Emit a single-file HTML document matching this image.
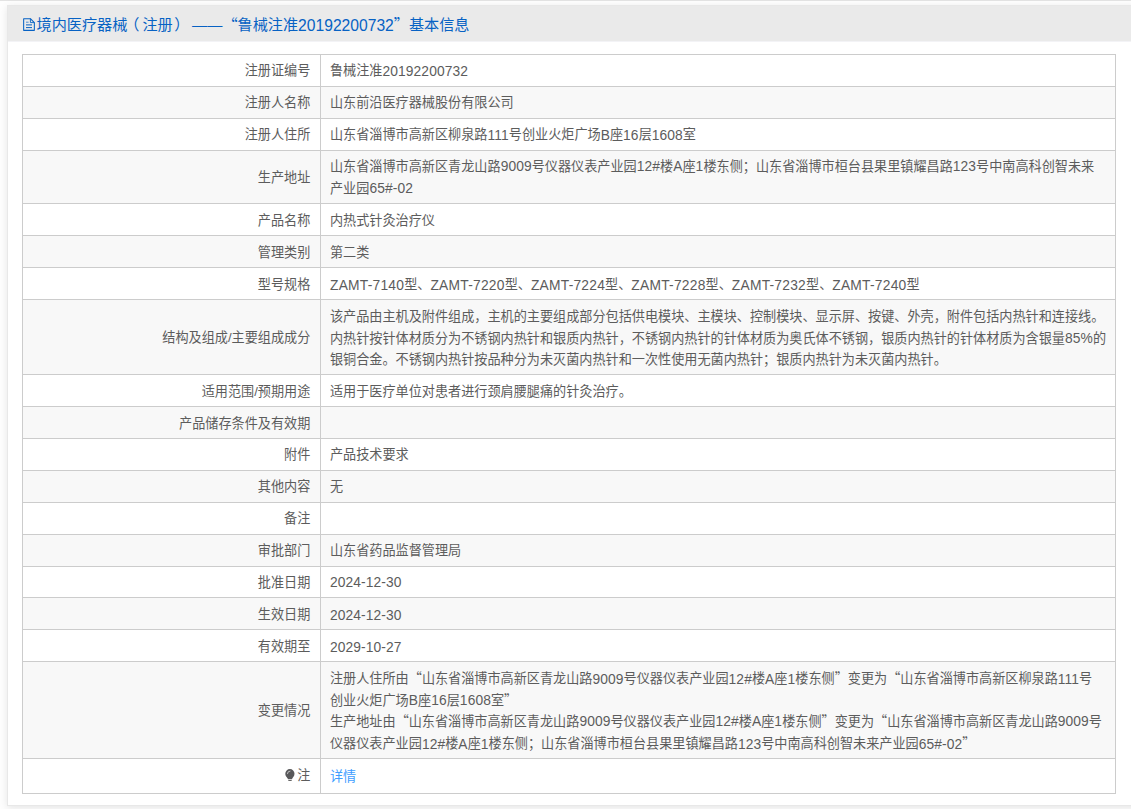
<!DOCTYPE html>
<html lang="zh-CN">
<head>
<meta charset="utf-8">
<title>境内医疗器械（注册）基本信息</title>
<style>
html,body{margin:0;padding:0;}
body{width:1131px;height:809px;overflow:hidden;background:#fefefe;position:relative;
 font-family:"Liberation Sans","Noto Sans CJK SC",sans-serif;font-size:13.13px;color:#5c5c5c;}
.e{font-size:13.8px;letter-spacing:0.1px;line-height:1;position:relative;top:0.5px;}
.z .e{letter-spacing:0.235px;}
.title .e{font-size:15.65px;letter-spacing:0;}
.topline{position:absolute;left:0;top:0;width:1131px;height:1px;background:#e3e3e3;}
.panel{position:absolute;left:7px;top:5px;width:1160px;height:801px;box-sizing:border-box;border:1px solid #e8e8e8;background:#fff;
 box-shadow:0 2px 8px rgba(0,0,0,0.10);}
.hd{position:absolute;left:0;top:0;right:0;height:35px;background:#eaeaea;border-bottom:1px solid #f3f3f6;}
.title{position:absolute;left:15px;top:-1px;height:36px;line-height:39px;font-size:15.15px;color:#0762c4;white-space:nowrap;}
.fi{position:absolute;left:0.2px;top:13px;}
.title .t{margin-left:13.5px;}
.q{font-family:"Noto Sans CJK SC",sans-serif;line-height:1;}
.tb{position:absolute;left:14px;top:48px;width:1094px;height:740px;box-sizing:border-box;border:1px solid #ccc;background:#fff;}
.r{display:flex;box-sizing:border-box;border-bottom:1px solid #ccc;background:#fff;}
.r.alt{background:#f8f8f8;}
.r.last{border-bottom:none;}
.l{width:298px;box-sizing:border-box;border-right:1px solid #ccc;padding-right:9.7px;padding-top:1px;display:flex;align-items:center;justify-content:flex-end;white-space:nowrap;line-height:21.7px;}
.v{flex:1;padding-left:9px;padding-top:1px;display:flex;align-items:center;white-space:nowrap;line-height:21.7px;}
.l>span,.v>div{position:relative;}
.up{position:relative;top:-1px;}
.pl{position:relative;left:-3px;}
.pr{position:relative;left:1.5px;}
.lnk{color:#409eff;}
.bulb{margin-right:2.5px;vertical-align:-2px;}
</style>
</head>
<body>
<div class="topline"></div>
<div class="panel">
<div class="hd"><div class="title"><svg class="fi" viewBox="0 0 12 13" width="12" height="13"><path d="M0.65 0.65H7.4L11.35 4.6V12.35H0.65Z" fill="none" stroke="#0762c4" stroke-width="1.05" stroke-linejoin="round"/><path d="M7.4 0.65V4.6H11.35" fill="none" stroke="#0762c4" stroke-width="0.9"/><path d="M3 4.2H5.6" stroke="#0762c4" stroke-opacity="0.7" stroke-width="1"/><path d="M3 6.9H9M3 9.6H9" stroke="#0762c4" stroke-width="1"/></svg><span class="t">境内医疗器械<span class="pl">（</span>注册<span class="pr">）</span> ——<span class="q">“</span>鲁械注准<span class="e">20192200732</span><span class="q">”</span>基本信息</span></div></div>
<div class="tb">
<div class="r" style="height:32px"><div class="l"><span>注册证编号</span></div><div class="v"><div>鲁械注准<span class="e">20192200732</span></div></div></div>
<div class="r alt" style="height:32px"><div class="l"><span>注册人名称</span></div><div class="v"><div>山东前沿医疗器械股份有限公司</div></div></div>
<div class="r" style="height:32px"><div class="l"><span>注册人住所</span></div><div class="v"><div>山东省淄博市高新区柳泉路<span class="e">111</span>号创业火炬广场<span class="e">B</span>座<span class="e">16</span>层<span class="e">1608</span>室</div></div></div>
<div class="r alt" style="height:53px"><div class="l"><span>生产地址</span></div><div class="v"><div>山东省淄博市高新区青龙山路<span class="e">9009</span>号仪器仪表产业园<span class="e">12#</span>楼<span class="e">A</span>座<span class="e">1</span>楼东侧；山东省淄博市桓台县果里镇耀昌路<span class="e">123</span>号中南高科创智未来<br>产业园<span class="e">65#-02</span></div></div></div>
<div class="r" style="height:32px"><div class="l"><span style="top:1px">产品名称</span></div><div class="v"><div style="top:1px">内热式针灸治疗仪</div></div></div>
<div class="r alt" style="height:32px"><div class="l"><span style="top:1px">管理类别</span></div><div class="v"><div style="top:1px">第二类</div></div></div>
<div class="r" style="height:32px"><div class="l"><span style="top:1px">型号规格</span></div><div class="v"><div style="top:1px"><span class="z"><span class="e">ZAMT-7140</span>型、<span class="e">ZAMT-7220</span>型、<span class="e">ZAMT-7224</span>型、<span class="e">ZAMT-7228</span>型、<span class="e">ZAMT-7232</span>型、<span class="e">ZAMT-7240</span>型</span></div></div></div>
<div class="r alt" style="height:75px"><div class="l"><span>结构及组成/主要组成成分</span></div><div class="v"><div style="top:1px">该产品由主机及附件组成，主机的主要组成部分包括供电模块、主模块、控制模块、显示屏、按键、外壳，附件包括内热针和连接线。<br>内热针按针体材质分为不锈钢内热针和银质内热针，不锈钢内热针的针体材质为奥氏体不锈钢，银质内热针的针体材质为含银量<span class="e">85%</span>的<br>银铜合金。不锈钢内热针按品种分为未灭菌内热针和一次性使用无菌内热针；银质内热针为未灭菌内热针。</div></div></div>
<div class="r" style="height:32px"><div class="l"><span style="top:1px">适用范围/预期用途</span></div><div class="v"><div style="top:1px">适用于医疗单位对患者进行颈肩腰腿痛的针灸治疗。</div></div></div>
<div class="r alt" style="height:32px"><div class="l"><span style="top:1px">产品储存条件及有效期</span></div><div class="v"><div style="top:1px"></div></div></div>
<div class="r" style="height:32px"><div class="l"><span>附件</span></div><div class="v"><div>产品技术要求</div></div></div>
<div class="r alt" style="height:32px"><div class="l"><span>其他内容</span></div><div class="v"><div>无</div></div></div>
<div class="r" style="height:32px"><div class="l"><span>备注</span></div><div class="v"><div></div></div></div>
<div class="r alt" style="height:32px"><div class="l"><span>审批部门</span></div><div class="v"><div>山东省药品监督管理局</div></div></div>
<div class="r" style="height:31px"><div class="l"><span>批准日期</span></div><div class="v"><div><span class="e">2024-12-30</span></div></div></div>
<div class="r alt" style="height:32px"><div class="l"><span style="top:1px">生效日期</span></div><div class="v"><div style="top:1px"><span class="e">2024-12-30</span></div></div></div>
<div class="r" style="height:32px"><div class="l"><span style="top:1px">有效期至</span></div><div class="v"><div style="top:1px"><span class="e">2029-10-27</span></div></div></div>
<div class="r alt" style="height:97px"><div class="l"><span>变更情况</span></div><div class="v"><div style="top:1px">注册人住所由<span class="q">“</span>山东省淄博市高新区青龙山路<span class="e">9009</span>号仪器仪表产业园<span class="e">12#</span>楼<span class="e">A</span>座<span class="e">1</span>楼东侧<span class="q">”</span>变更为<span class="q">“</span>山东省淄博市高新区柳泉路<span class="e">111</span>号<br>创业火炬广场<span class="e">B</span>座<span class="e">16</span>层<span class="e">1608</span>室<span class="q">”</span><br><span class="up">生产地址由<span class="q">“</span>山东省淄博市高新区青龙山路<span class="e">9009</span>号仪器仪表产业园<span class="e">12#</span>楼<span class="e">A</span>座<span class="e">1</span>楼东侧<span class="q">”</span>变更为<span class="q">“</span>山东省淄博市高新区青龙山路<span class="e">9009</span>号</span><br>仪器仪表产业园<span class="e">12#</span>楼<span class="e">A</span>座<span class="e">1</span>楼东侧；山东省淄博市桓台县果里镇耀昌路<span class="e">123</span>号中南高科创智未来产业园<span class="e">65#-02</span><span class="q">”</span></div></div></div>
<div class="r last" style="height:34px"><div class="l"><span style="top:-1px"><svg class="bulb" viewBox="0 0 10 13" width="10" height="13"><path d="M3 10.2C3 8.8 0.3 7.6 0.3 4.7A4.6 4.6 0 0 1 9.5 4.7C9.5 7.6 7 8.8 7 10.2Z" fill="#58585a"/><path d="M2.4 4.7A2.6 2.6 0 0 1 5 2.1" stroke="#fff" stroke-opacity="0.75" stroke-width="0.8" fill="none" stroke-linecap="round"/><rect x="3.2" y="11.1" width="3.6" height="1" rx="0.4" fill="#666"/></svg>注</span></div><div class="v"><div><a class="lnk">详情</a></div></div></div>
</div>
</div>
</body>
</html>
